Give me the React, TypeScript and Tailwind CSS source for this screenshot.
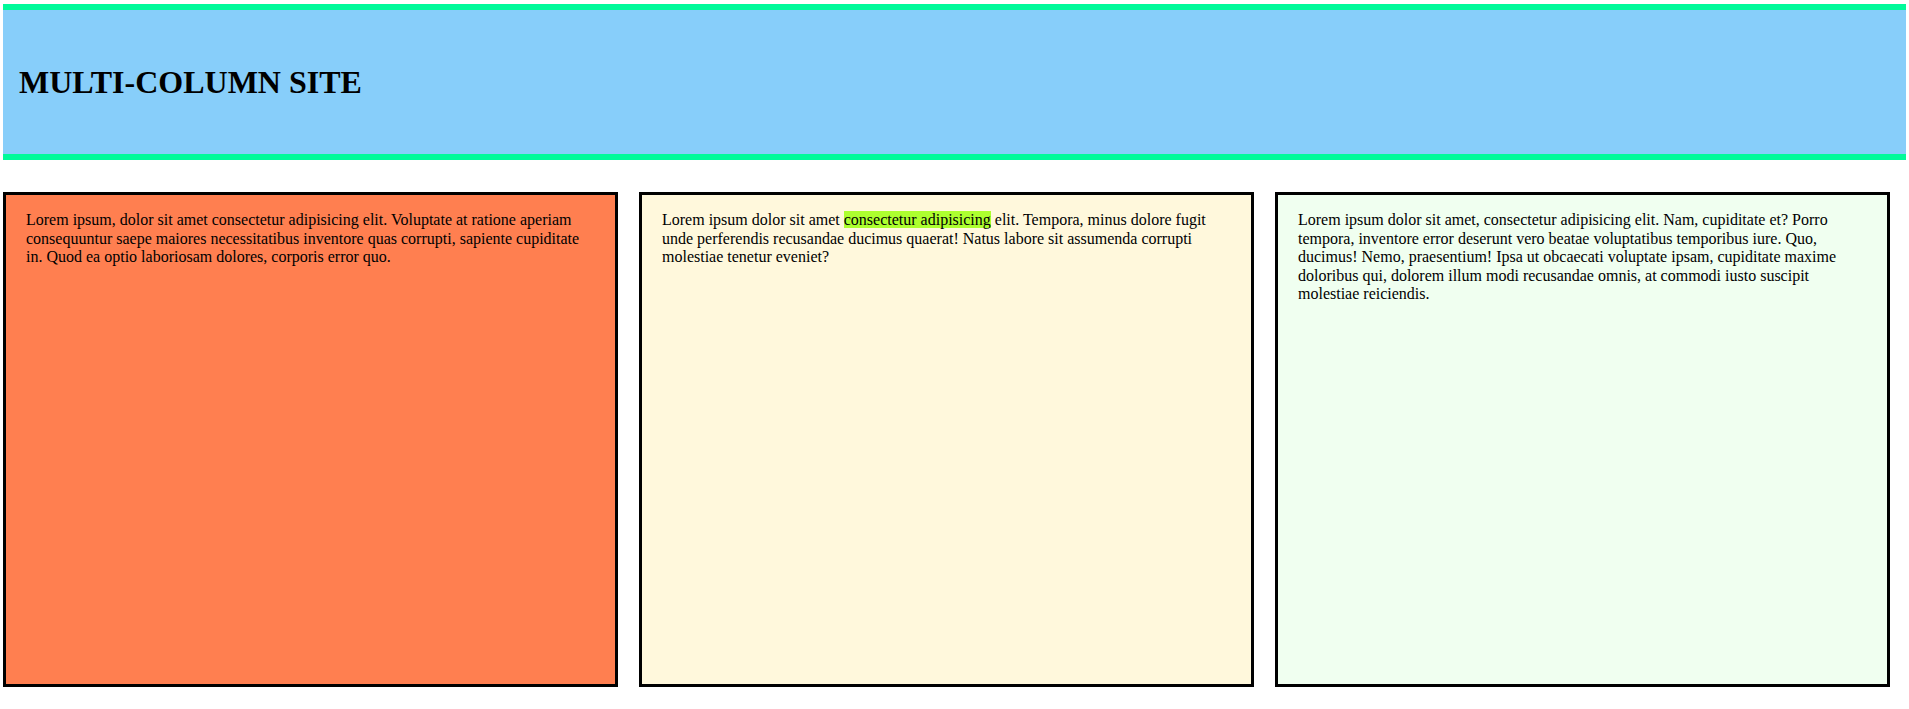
export default function App() {
  return (
    <div className="min-h-screen bg-white text-black font-['Liberation_Serif','Times_New_Roman',serif]">
      {/* Header */}
      <header className="mx-[3px] mt-[4px] flex h-[156px] items-center border-y-[6px] border-[#00fa9a] bg-[#87cefa] px-4">
        <h1 className="text-[32px] font-bold leading-none">MULTI-COLUMN SITE</h1>
      </header>

      {/* Columns */}
      <main className="ml-[3px] mt-8 grid w-[1887px] grid-cols-3 gap-[21px]">
        <section className="h-[495px] border-[3px] border-black bg-[#ff7f50] px-5 pt-4">
          <p className="text-base leading-[18.5px]">
            Lorem ipsum, dolor sit amet consectetur adipisicing elit. Voluptate at ratione aperiam
            consequuntur saepe maiores necessitatibus inventore quas corrupti, sapiente cupiditate
            in. Quod ea optio laboriosam dolores, corporis error quo.
          </p>
        </section>
        <section className="h-[495px] border-[3px] border-black bg-[#fff8dc] px-5 pt-4">
          <p className="text-base leading-[18.5px]">
            Lorem ipsum dolor sit amet{' '}
            <mark className="bg-[#adff2f] text-black">consectetur adipisicing</mark> elit. Tempora,
            minus dolore fugit unde perferendis recusandae ducimus quaerat! Natus labore sit
            assumenda corrupti molestiae tenetur eveniet?
          </p>
        </section>
        <section className="h-[495px] border-[3px] border-black bg-[#f0fff0] px-5 pt-4">
          <p className="text-base leading-[18.5px]">
            Lorem ipsum dolor sit amet, consectetur adipisicing elit. Nam, cupiditate et? Porro
            tempora, inventore error deserunt vero beatae voluptatibus temporibus iure. Quo,
            ducimus! Nemo, praesentium! Ipsa ut obcaecati voluptate ipsam, cupiditate maxime
            doloribus qui, dolorem illum modi recusandae omnis, at commodi iusto suscipit
            molestiae reiciendis.
          </p>
        </section>
      </main>
    </div>
  )
}
